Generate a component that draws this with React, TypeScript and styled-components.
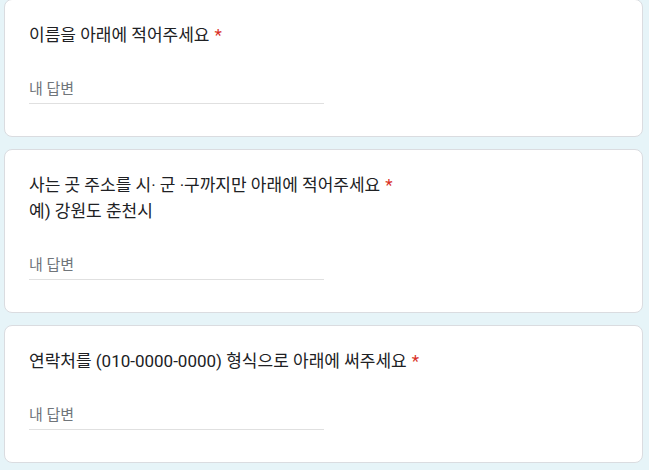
import React from "react";
import styled, { createGlobalStyle } from "styled-components";

const GlobalStyle = createGlobalStyle`
  html, body {
    margin: 0;
    padding: 0;
    background: #e6f4f8;
  }
  body {
    font-family: Roboto, "Noto Sans CJK KR", "Noto Sans", sans-serif;
    overflow: hidden;
  }
`;

const Page = styled.div`
  display: flex;
  flex-direction: column;
  gap: 12px;
  padding: 0 6px 0 4px;
  margin-top: -1px;
  width: 649px;
  box-sizing: border-box;
`;

const Card = styled.section`
  background: #ffffff;
  border: 1px solid #dadce0;
  border-radius: 8px;
  padding: 23px 24px 24px;
  display: flex;
  flex-direction: column;
`;

const Title = styled.div`
  font-size: 17px;
  line-height: 24px;
  color: #202124;
  white-space: nowrap;
`;

const Description = styled.div`
  font-size: 17px;
  line-height: 24px;
  color: #202124;
  margin-top: 2px;
`;

const Required = styled.span`
  color: #d93025;
  margin-left: 5px;
`;

const AnswerField = styled.div`
  margin-top: 32px;
  margin-bottom: 8px;
  width: 50%;
  padding-bottom: 4px;
  border-bottom: 1px solid #e0e0e0;
  font-size: 15px;
  line-height: 20px;
  color: #70757a;
`;

type Q = { title: string; desc?: string };

const questions: Q[] = [
  { title: "이름을 아래에 적어주세요" },
  { title: "사는 곳 주소를 시· 군 ·구까지만 아래에 적어주세요", desc: "예) 강원도 춘천시" },
  { title: "연락처를 (010-0000-0000) 형식으로 아래에 써주세요" },
];

export default function App() {
  return (
    <>
      <GlobalStyle />
      <Page>
        {questions.map((q, i) => (
          <Card key={i}>
            <Title>
              {q.title}
              <Required>*</Required>
            </Title>
            {q.desc && <Description>{q.desc}</Description>}
            <AnswerField>내 답변</AnswerField>
          </Card>
        ))}
      </Page>
    </>
  );
}
